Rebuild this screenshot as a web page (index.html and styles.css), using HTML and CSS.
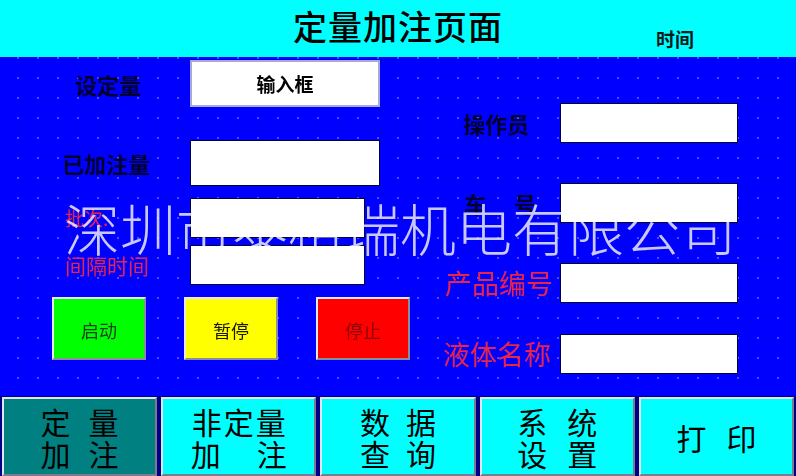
FILE: index.html
```html
<!DOCTYPE html>
<html lang="zh-CN">
<head>
<meta charset="utf-8">
<title>定量加注页面</title>
<link rel="stylesheet" href="styles.css">
</head>
<body>
<div class="screen">
  <header class="titlebar">
    <div class="spacer"></div>
    <h1 class="title">定量加注页面</h1>
    <div class="clock">时间</div>
  </header>

  <main class="panel">
    <section class="left">
      <div class="row row-set">
        <span class="label label-dark lbl-set">设定量</span>
        <div class="field field-input">输入框</div>
      </div>
      <div class="row row-done">
        <span class="label label-dark lbl-done">已加注量</span>
        <div class="field field-wide"></div>
      </div>
      <div class="row row-batch">
        <span class="label label-red lbl-batch">批次:</span>
        <div class="field field-narrow"></div>
      </div>
      <div class="row row-interval">
        <span class="label label-red lbl-interval">间隔时间</span>
        <div class="field field-narrow"></div>
      </div>
      <div class="actions">
        <button class="act act-start">启动</button>
        <button class="act act-pause">暂停</button>
        <button class="act act-stop">停止</button>
      </div>
    </section>

    <section class="right">
      <div class="rrow rrow-op">
        <span class="label label-dark lbl-op">操作员</span>
        <div class="field field-right"></div>
      </div>
      <div class="rrow rrow-car">
        <span class="label label-dark lbl-car"><span>车</span><span>号</span></span>
        <div class="field field-right"></div>
      </div>
      <div class="rrow rrow-prod">
        <span class="label label-big lbl-prod">产品编号</span>
        <div class="field field-right"></div>
      </div>
      <div class="rrow rrow-liq">
        <span class="label label-big lbl-liq">液体名称</span>
        <div class="field field-right"></div>
      </div>
    </section>

    <div class="watermark">深圳市泰格瑞机电有限公司</div>
  </main>

  <nav class="navbar">
    <button class="nav nav-active">
      <span class="line g18"><span>定</span><span>量</span></span>
      <span class="line g18"><span>加</span><span>注</span></span>
    </button>
    <button class="nav">
      <span class="line g0"><span>非</span><span>定</span><span>量</span></span>
      <span class="line g36"><span>加</span><span>注</span></span>
    </button>
    <button class="nav">
      <span class="line g16"><span>数</span><span>据</span></span>
      <span class="line g16"><span>查</span><span>询</span></span>
    </button>
    <button class="nav">
      <span class="line g20"><span>系</span><span>统</span></span>
      <span class="line g20"><span>设</span><span>置</span></span>
    </button>
    <button class="nav">
      <span class="line g20"><span>打</span><span>印</span></span>
    </button>
  </nav>
</div>
</body>
</html>
```

FILE: styles.css
```css
html, body {
  margin: 0;
  padding: 0;
  background: #0000ff;
}

.screen {
  width: 796px;
  height: 476px;
  display: flex;
  flex-direction: column;
  overflow: hidden;
  font-family: "Noto Sans CJK SC", "Noto Sans", sans-serif;
}

/* ---------- title bar ---------- */
.titlebar {
  height: 57px;
  flex: none;
  background: #00ffff;
  display: grid;
  grid-template-columns: 1fr auto 1fr;
  align-items: start;
}

.title {
  margin: 0;
  padding-top: 4px;
  font-size: 34px;
  line-height: 44px;
  font-weight: 500;
  color: #000000;
  letter-spacing: 1px;
}

.clock {
  padding-left: 153px;
  padding-top: 27px;
  font-size: 19px;
  line-height: 24px;
  font-weight: 700;
  color: #0a1a1a;
}

/* ---------- main panel ---------- */
.panel {
  position: relative;
  isolation: isolate;
  height: 339px;
  flex: none;
  display: flex;
  padding: 3px 0 0 52px;
  box-sizing: border-box;
  background-color: #0000ff;
  background-image: radial-gradient(circle, rgba(200, 200, 255, 0.8) 0.5px, transparent 0.9px);
  background-size: 20px 20px;
  background-position: 8px -9px;
}

.left {
  width: 358px;
  display: flex;
  flex-direction: column;
}

.row {
  display: flex;
  align-items: center;
}

.row .label {
  width: 138px;
  box-sizing: border-box;
}

.row-set { height: 47px; }
.row-done { height: 46px; margin-top: 33px; }
.row-batch { height: 40px; margin-top: 12px; }
.row-interval { height: 40px; margin-top: 7px; }

.lbl-set { padding-left: 23px; }
.lbl-done { padding-left: 10px; }
.lbl-batch { padding-left: 13px; }
.lbl-interval { padding-left: 13px; }

.label {
  white-space: nowrap;
}

.label-dark {
  font-size: 22px;
  line-height: 26px;
  font-weight: 700;
  color: #00002e;
}

.label-red {
  font-size: 21px;
  line-height: 26px;
  color: #e8244c;
}

.lbl-batch {
  font-size: 19px;
}

.label-big {
  font-size: 27px;
  line-height: 30px;
  color: #e8244c;
}

.field {
  height: 100%;
  box-sizing: border-box;
  background: #ffffff;
  border: 1px solid #00003a;
}

.field-input {
  width: 190px;
  border: 2px solid #a8a8dc;
  display: flex;
  align-items: center;
  justify-content: center;
  font-size: 19px;
  font-weight: 700;
  color: #000000;
}

.field-wide { width: 190px; }
.field-narrow { width: 175px; }

.actions {
  display: flex;
  gap: 38px;
  margin-top: 12px;
}

.act {
  width: 94px;
  height: 63px;
  box-sizing: border-box;
  border: 2px solid;
  border-color: #e8e8f0 #8c8c9c #8c8c9c #e8e8f0;
  font-family: "Noto Sans CJK SC", sans-serif;
  font-size: 18px;
  padding: 0;
  padding-top: 2px;
}

.act-start { background: #00ff00; color: #184018; }
.act-pause { background: #ffff00; color: #1a1a00; }
.act-stop { background: #ff0000; color: #8a0000; }

/* right column */
.right {
  margin-left: 33px;
  margin-top: 43px;
  display: flex;
  flex-direction: column;
}

.rrow {
  display: flex;
  align-items: center;
  height: 40px;
}

.rrow .label {
  width: 117px;
  box-sizing: border-box;
}

.rrow-car { margin-top: 40px; }
.rrow-prod { margin-top: 40px; }
.rrow-liq { margin-top: 31px; }

.lbl-op { padding-left: 20px; }
.lbl-car {
  padding-left: 21px;
  display: flex;
  gap: 28px;
}
.lbl-prod { padding-left: 2px; }
.lbl-liq { padding-left: 0; }

.field-right { width: 178px; }

/* watermark */
.watermark {
  position: absolute;
  left: 64px;
  top: 140px;
  font-size: 56px;
  line-height: 60px;
  font-weight: 300;
  color: #c8c8f0;
  mix-blend-mode: screen;
  white-space: nowrap;
  pointer-events: none;
}

/* ---------- bottom nav ---------- */
.navbar {
  flex: 1;
  display: grid;
  grid-template-columns: repeat(5, 1fr);
  gap: 4px;
  padding: 1px 2px 0;
  background: #000088;
}

.nav {
  box-sizing: border-box;
  margin: 0;
  padding: 0;
  border: 2px solid;
  border-color: #e4e4ec #7c7c8c #7c7c8c #e4e4ec;
  background: #00ffff;
  display: flex;
  flex-direction: column;
  align-items: center;
  justify-content: center;
  font-family: "Noto Sans CJK SC", sans-serif;
  font-size: 30px;
  line-height: 32px;
  color: #000000;
}

.nav-active {
  background: #008080;
}

.line {
  display: flex;
  justify-content: center;
}

.g0 { gap: 2px; }
.g16 { gap: 16px; }
.g18 { gap: 18px; }
.g20 { gap: 20px; }
.g36 { gap: 36px; }
```
